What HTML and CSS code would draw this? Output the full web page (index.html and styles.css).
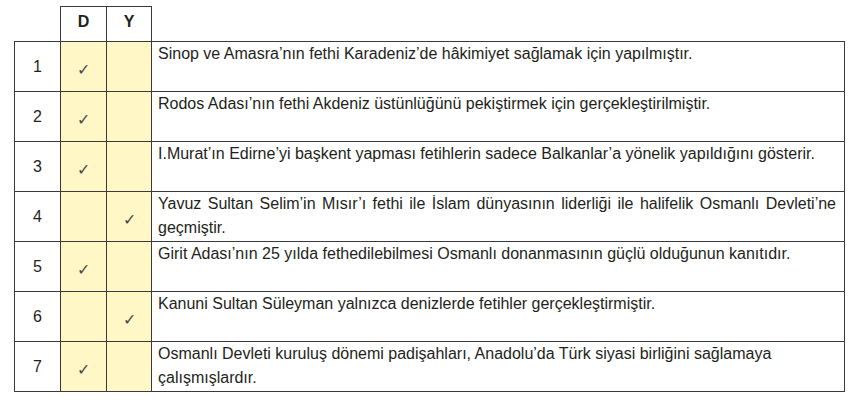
FILE: index.html
```html
<!DOCTYPE html>
<html lang="tr">
<head>
<meta charset="utf-8">
<link rel="stylesheet" href="styles.css">
</head>
<body>
<table class="quiz">
  <colgroup>
    <col class="c-num"><col class="c-mark"><col class="c-mark2"><col class="c-text">
  </colgroup>
  <thead>
    <tr class="head">
      <th class="blank"></th>
      <th class="hd">D</th>
      <th class="hd">Y</th>
      <th class="blank"></th>
    </tr>
  </thead>
  <tbody>
    <tr>
      <td class="num">1</td><td class="mark">✓</td><td class="mark"></td>
      <td class="txt">Sinop ve Amasra’nın fethi Karadeniz’de hâkimiyet sağlamak için yapılmıştır.</td>
    </tr>
    <tr>
      <td class="num">2</td><td class="mark">✓</td><td class="mark"></td>
      <td class="txt">Rodos Adası’nın fethi Akdeniz üstünlüğünü pekiştirmek için gerçekleştirilmiştir.</td>
    </tr>
    <tr>
      <td class="num">3</td><td class="mark">✓</td><td class="mark"></td>
      <td class="txt">I.Murat’ın Edirne’yi başkent yapması fetihlerin sadece Balkanlar’a yönelik yapıldığını gösterir.</td>
    </tr>
    <tr>
      <td class="num">4</td><td class="mark"></td><td class="mark">✓</td>
      <td class="txt just">Yavuz Sultan Selim’in Mısır’ı fethi ile İslam dünyasının liderliği ile halifelik Osmanlı Devleti’ne geçmiştir.</td>
    </tr>
    <tr>
      <td class="num">5</td><td class="mark">✓</td><td class="mark"></td>
      <td class="txt">Girit Adası’nın 25 yılda fethedilebilmesi Osmanlı donanmasının güçlü olduğunun kanıtıdır.</td>
    </tr>
    <tr>
      <td class="num">6</td><td class="mark"></td><td class="mark">✓</td>
      <td class="txt">Kanuni Sultan Süleyman yalnızca denizlerde fetihler gerçekleştirmiştir.</td>
    </tr>
    <tr>
      <td class="num">7</td><td class="mark">✓</td><td class="mark"></td>
      <td class="txt">Osmanlı Devleti kuruluş dönemi padişahları, Anadolu’da Türk siyasi birliğini sağlamaya çalışmışlardır.</td>
    </tr>
  </tbody>
</table>
</body>
</html>
```
FILE: styles.css
```css
html, body {
  margin: 0;
  padding: 0;
  background: #ffffff;
}
body {
  font-family: "Liberation Sans", Arial, sans-serif;
  color: #231f20;
  padding: 6px 0 0 14px;
}
.quiz {
  border-collapse: collapse;
  table-layout: fixed;
  width: 831px;
}
.c-num { width: 46px; }
.c-mark { width: 46px; }
.c-mark2 { width: 45px; }
.quiz th, .quiz td {
  border: 1.5px solid #3a3a3a;
  padding: 0;
}
.head {
  height: 35px;
}
.head .blank {
  border-top: none;
  border-left: none;
  border-right: none;
}
.head .blank:first-child {
  border-right: 1.5px solid #3a3a3a;
}
.head .blank:last-child {
  border-left: 1.5px solid #3a3a3a;
}
.hd {
  font-size: 16px;
  font-weight: bold;
  text-align: center;
  vertical-align: middle;
  padding-bottom: 5px !important;
  background: #ffffff;
}
.quiz tbody tr {
  height: 50px;
}
.num {
  text-align: center;
  vertical-align: middle;
  font-size: 16px;
}
.mark {
  background: #fff8c6;
  text-align: center;
  vertical-align: middle;
  font-size: 16px;
  color: #4a4a4a;
  padding-top: 6px !important;
}
.txt {
  vertical-align: top;
  font-size: 16px;
  line-height: 24px;
  padding: 0 8px 0 6px !important;
  text-align: left;
}
.just {
  text-align: justify;
}
```
